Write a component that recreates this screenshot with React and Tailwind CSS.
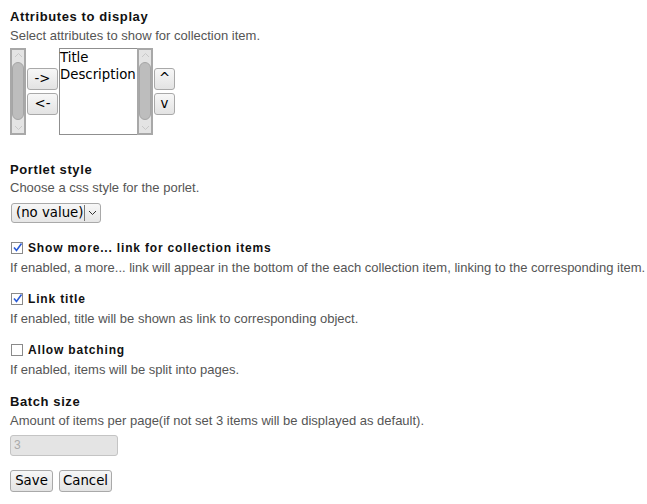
import React from 'react';

const Scrollbar = ({ className = '' }) => (
  <div className={`relative w-[16px] h-full bg-[#e4e4e4] border-2 border-[#a8a8a8] ${className}`}>
    <svg className="absolute left-[2px] top-[2px]" width="9" height="6" viewBox="0 0 9 6">
      <path d="M1 5 L4.5 1.5 L8 5" fill="none" stroke="#c8c8c8" strokeWidth="1" />
    </svg>
    <div className="absolute left-[0px] top-[12px] w-[12px] h-[58px] rounded-[6px] bg-[#bdbdbd] border border-[#a5a5a5]" />
    <svg className="absolute left-[2px] bottom-[2px]" width="9" height="6" viewBox="0 0 9 6">
      <path d="M1 1 L4.5 4.5 L8 1" fill="none" stroke="#c8c8c8" strokeWidth="1" />
    </svg>
  </div>
);

const Btn = ({ children, className = '' }) => (
  <button
    className={`h-[22px] border border-[#a9a9a9] rounded-[3px] bg-gradient-to-b from-[#f7f7f7] to-[#e3e3e3] text-[13.3px] text-black leading-none font-['DejaVu_Sans',sans-serif] ${className}`}
  >
    {children}
  </button>
);

const Check = ({ checked }) => (
  <span className="inline-block w-[12px] h-[12px] border border-[#8a8a8a] bg-white relative">
    {checked && (
      <svg className="absolute left-[0px] top-[-1px]" width="11" height="11" viewBox="0 0 11 11">
        <path d="M2 5.5 L4.5 8.5 L9.5 1.5" fill="none" stroke="#2a5bd7" strokeWidth="1.6" />
      </svg>
    )}
  </span>
);

const Label = ({ children }) => (
  <div className="h-[18px] leading-[18px] text-[13px] font-bold tracking-[0.6px] text-[#111]">{children}</div>
);

const CheckLabel = ({ children }) => (
  <div className="h-[18px] leading-[18px] text-[12px] font-bold tracking-[0.83px] text-[#111]">{children}</div>
);

const Help = ({ children }) => (
  <div className="h-[18px] leading-[18px] text-[13px] text-[#555] whitespace-nowrap">{children}</div>
);

export default function App() {
  return (
    <div className="w-[647px] h-[504px] bg-white pl-[10px] pt-[8px] font-['Liberation_Sans',Arial,sans-serif]">
      <Label>Attributes to display</Label>
      <div className="mt-[1px]">
        <Help>Select attributes to show for collection item.</Help>
      </div>

      <div className="mt-[3px] flex items-stretch h-[87px]">
        <Scrollbar />
        <div className="ml-[1px] flex flex-col justify-center gap-[3px]">
          <Btn className="w-[31px]">-&gt;</Btn>
          <Btn className="w-[31px]">&lt;-</Btn>
        </div>
        <div className="ml-[1px] flex h-full">
          <div className="w-[78px] h-full bg-white border border-r-0 border-[#8f8f8f] text-[13.3px] leading-[17px] text-black font-['DejaVu_Sans',sans-serif]">
            <div>Title</div>
            <div>Description</div>
          </div>
          <Scrollbar />
        </div>
        <div className="ml-[1px] flex flex-col justify-center gap-[3px]">
          <Btn className="w-[21px]">^</Btn>
          <Btn className="w-[21px]">v</Btn>
        </div>
      </div>

      <div className="mt-[26px]">
        <Label>Portlet style</Label>
        <Help>Choose a css style for the porlet.</Help>
      </div>
      <div className="mt-[6px] ml-[1px] w-[90px] h-[20px] flex items-center border border-[#a9a9a9] rounded-[3px] bg-gradient-to-b from-[#f7f7f7] to-[#e6e6e6] font-['DejaVu_Sans',sans-serif] text-[13.3px] text-black">
        <span className="pl-[4px] leading-none">(no value)</span>
        <span className="ml-[1px] w-px h-[16px] bg-[#777]" />
        <svg className="ml-[3px]" width="9" height="6" viewBox="0 0 9 6">
          <path d="M1 1 L4.5 4.5 L8 1" fill="none" stroke="#333" strokeWidth="1" />
        </svg>
      </div>

      <div className="mt-[16px]">
        <div className="flex items-center gap-[5px] ml-[1px]">
          <Check checked />
          <CheckLabel>Show more... link for collection items</CheckLabel>
        </div>
        <div className="mt-[2px]">
          <Help>If enabled, a more... link will appear in the bottom of the each collection item, linking to the corresponding item.</Help>
        </div>
      </div>

      <div className="mt-[13px]">
        <div className="flex items-center gap-[5px] ml-[1px]">
          <Check checked />
          <CheckLabel>Link title</CheckLabel>
        </div>
        <div className="mt-[2px]">
          <Help>If enabled, title will be shown as link to corresponding object.</Help>
        </div>
      </div>

      <div className="mt-[13px]">
        <div className="flex items-center gap-[5px] ml-[1px]">
          <Check />
          <CheckLabel>Allow batching</CheckLabel>
        </div>
        <div className="mt-[2px]">
          <Help>If enabled, items will be split into pages.</Help>
        </div>
      </div>

      <div className="mt-[14px]">
        <Label>Batch size</Label>
        <div className="mt-[1px]">
          <Help>Amount of items per page(if not set 3 items will be displayed as default).</Help>
        </div>
      </div>
      <div className="mt-[5px] w-[108px] h-[21px] border border-[#c4c4c4] rounded-[3px] bg-[#e4e4e4] text-[12px] text-[#aaa] pl-[3px] leading-[19px]">
        3
      </div>

      <div className="mt-[14px] flex gap-[6px]">
        <Btn className="w-[43px] h-[22px]">Save</Btn>
        <Btn className="w-[53px] h-[22px]">Cancel</Btn>
      </div>
    </div>
  );
}
